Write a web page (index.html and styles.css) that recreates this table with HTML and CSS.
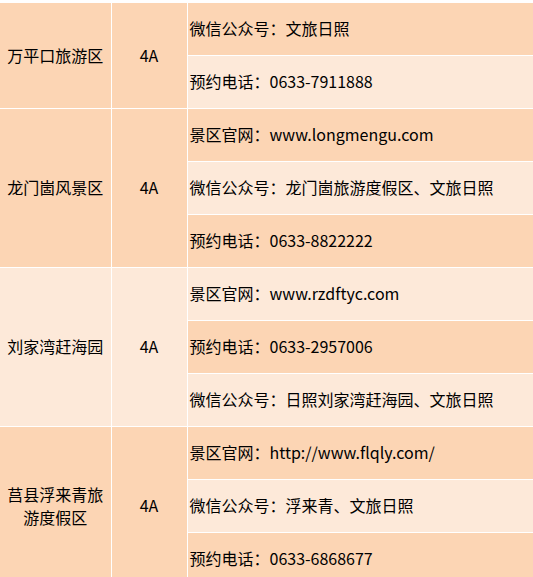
FILE: index.html
```html
<!DOCTYPE html>
<html lang="zh-CN">
<head>
<meta charset="utf-8">
<link rel="stylesheet" href="styles.css">
</head>
<body>
<table class="spots">
  <colgroup><col class="c-name"><col class="c-level"><col class="c-info"></colgroup>
  <tbody>
    <tr class="first">
      <td rowspan="2" class="name dark">万平口旅游区</td>
      <td rowspan="2" class="level dark">4A</td>
      <td class="info dark">微信公众号：文旅日照</td>
    </tr>
    <tr><td class="info light">预约电话：0633-7911888</td></tr>

    <tr>
      <td rowspan="3" class="name dark">龙门崮风景区</td>
      <td rowspan="3" class="level dark">4A</td>
      <td class="info dark">景区官网：www.longmengu.com</td>
    </tr>
    <tr><td class="info light">微信公众号：龙门崮旅游度假区、文旅日照</td></tr>
    <tr><td class="info dark">预约电话：0633-8822222</td></tr>

    <tr>
      <td rowspan="3" class="name light">刘家湾赶海园</td>
      <td rowspan="3" class="level light">4A</td>
      <td class="info light">景区官网：www.rzdftyc.com</td>
    </tr>
    <tr><td class="info dark">预约电话：0633-2957006</td></tr>
    <tr><td class="info light">微信公众号：日照刘家湾赶海园、文旅日照</td></tr>

    <tr>
      <td rowspan="3" class="name dark">莒县浮来青旅游度假区</td>
      <td rowspan="3" class="level dark">4A</td>
      <td class="info dark">景区官网：http://www.flqly.com/</td>
    </tr>
    <tr><td class="info light">微信公众号：浮来青、文旅日照</td></tr>
    <tr><td class="info dark">预约电话：0633-6868677</td></tr>
  </tbody>
</table>
</body>
</html>
```

FILE: styles.css
```css
html {
  overflow: hidden;
  background: #ffffff;
}
body {
  margin: 0;
  padding-top: 3px;
  background: #ffffff;
  font-family: "Noto Sans CJK SC", "Noto Sans", sans-serif;
  font-size: 16px;
  color: #000000;
}
.spots {
  border-collapse: collapse;
  table-layout: fixed;
  width: 533px;
}
.c-name { width: 111px; }
.c-level { width: 76px; }
.c-info { width: 346px; }
.spots td {
  border-right: 1px solid #ffffff;
  border-bottom: 1px solid #ffffff;
  height: 53px;
  padding: 0;
  vertical-align: middle;
  line-height: 23px;
  box-sizing: border-box;
}
.spots tr.first td.info { height: 52px; }
.spots td.info {
  border-right: none;
  padding-left: 2px;
  white-space: nowrap;
}
.name {
  text-align: center;
  padding: 0 6px !important;
}
.level {
  text-align: center;
}
.dark { background: #fcd5b4; }
.light { background: #fde9d9; }
```
